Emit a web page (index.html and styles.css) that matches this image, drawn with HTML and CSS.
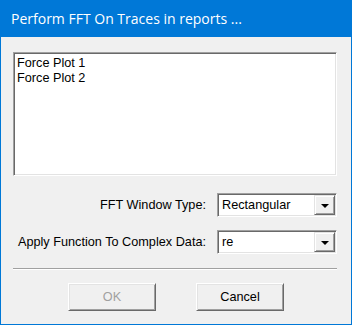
FILE: index.html
```html
<!DOCTYPE html>
<html lang="en">
<head>
  <meta charset="UTF-8" />
  <title>Perform FFT On Traces in reports ...</title>
  <link rel="stylesheet" href="styles.css">
</head>
<body>
  <div class="dialog">
    <div class="titlebar">Perform FFT On Traces in reports ...</div>

    <div class="content">
      <div class="listbox">
        <div class="item">Force Plot 1</div>
        <div class="item">Force Plot 2</div>
      </div>

      <div class="form">
        <div class="row">
          <label>FFT Window Type:</label>
          <div class="combo">
            <span class="value">Rectangular</span>
            <span class="drop"><span class="arrow"></span></span>
          </div>
        </div>
        <div class="row">
          <label>Apply Function To Complex Data:</label>
          <div class="combo">
            <span class="value">re</span>
            <span class="drop"><span class="arrow"></span></span>
          </div>
        </div>
      </div>

      <div class="separator"></div>

      <div class="buttons">
        <button class="btn" disabled>OK</button>
        <button class="btn">Cancel</button>
      </div>
    </div>
  </div>
</body>
</html>
```

FILE: styles.css
```css
body {
  margin: 0;
  font-family: 'Liberation Sans', Arial, sans-serif;
  font-size: 12.7px;
  color: #000;
}

.dialog {
  width: 352px;
  height: 325px;
  box-sizing: border-box;
  border: 1px solid #0078d7;
  border-top: none;
  background-color: #f0f0f0;
  display: flex;
  flex-direction: column;
}

.titlebar {
  height: 37px;
  margin: 0 -1px;
  background-color: #0078d7;
  color: #fff;
  font-family: 'Open Sans', 'Noto Sans', sans-serif;
  font-size: 14px;
  line-height: 37px;
  padding-left: 11px;
}

.content {
  padding: 15px 14px 0 12px;
  display: flex;
  flex-direction: column;
}

.listbox {
  height: 124px;
  box-sizing: border-box;
  background-color: #fff;
  border: 1px solid;
  border-color: #a0a0a0 #fff #fff #a0a0a0;
  box-shadow: inset 1px 1px 0 #696969, inset -1px -1px 0 #e3e3e3;
  padding: 3px 3px;
}

.item {
  line-height: 15px;
}

.form {
  margin-top: 17px;
  display: flex;
  flex-direction: column;
  gap: 13px;
}

.row {
  display: flex;
  justify-content: flex-end;
  align-items: center;
  gap: 11px;
}

.combo {
  width: 120px;
  height: 24px;
  box-sizing: border-box;
  background-color: #fff;
  border: 1px solid;
  border-color: #a0a0a0 #fff #fff #a0a0a0;
  box-shadow: inset 1px 1px 0 #696969, inset -1px -1px 0 #e3e3e3;
  display: flex;
  align-items: stretch;
  padding: 1px;
}

.combo .value {
  flex: 1;
  padding-left: 3px;
  display: flex;
  align-items: center;
}

.drop {
  width: 21px;
  box-sizing: border-box;
  background-color: #f0f0f0;
  border: 1px solid;
  border-color: #e3e3e3 #696969 #696969 #e3e3e3;
  box-shadow: inset 1px 1px 0 #fff, inset -1px -1px 0 #a0a0a0;
  display: flex;
  align-items: center;
  justify-content: center;
}

.arrow {
  width: 0;
  height: 0;
  margin-top: 1px;
  border-left: 4px solid transparent;
  border-right: 4px solid transparent;
  border-top: 4px solid #000;
}

.separator {
  margin-top: 14px;
  height: 1px;
  background-color: #a0a0a0;
  border-bottom: 1px solid #fff;
}

.buttons {
  margin-top: 13px;
  display: flex;
  justify-content: center;
  gap: 40px;
  padding-left: 2px;
}

.btn {
  width: 88px;
  height: 28px;
  font-family: inherit;
  font-size: 12.7px;
  background-color: #f0f0f0;
  border: 1px solid;
  border-color: #fff #696969 #696969 #fff;
  box-shadow: inset 1px 1px 0 #e3e3e3, inset -1px -1px 0 #a0a0a0;
  padding: 0;
  color: #000;
}

.btn:disabled {
  color: #a0a0a0;
}
```
